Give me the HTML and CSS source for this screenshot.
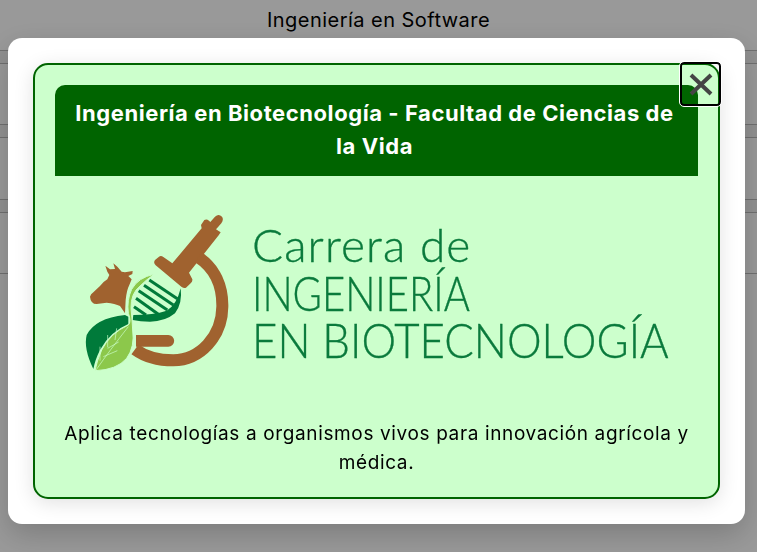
FILE: index.html
```html
<!DOCTYPE html>
<html lang="es">
<head>
<meta charset="utf-8">
<title>Carreras</title>
<link rel="stylesheet" href="styles.css">
</head>
<body>
<main class="page">
  <h1 class="page-title">Ingeniería en Software</h1>
  <div class="row"><div class="row-band"></div></div>
  <div class="row"><div class="row-band"></div></div>
  <div class="row"><div class="row-band"></div></div>
  <div class="row"></div>
</main>
<div class="backdrop">
  <section class="modal">
    <article class="card">
      <h2 class="card-title">Ingeniería en Biotecnología - Facultad de Ciencias de la Vida</h2>
      <div class="logo">
        <svg class="logo-mark" viewBox="0 0 570 570" width="190" height="190" aria-hidden="true">
          <g fill="#a0622f">
            <path d="M465 50Q476 40 486 50Q492 58 484 70L468 88L482 97L476 106L387 218L397 238Q398 244 392 250L378 263Q372 266 365 261L287 196Q279 188 285 180L297 170Q303 166 310 171L337 190L425 85L423 75L433 60Q440 56 447 62L451 66Z"/>
            <path d="M228 405H325A17.500 17.500 0 0 1 325 440H228Z"/>
            <path d="M90 290Q92 282 100 277L120 258Q130 245 142 238L148 225L142 215L136 197L150 208L165 207L160 190L172 200L185 215L195 217L218 213L217 222L205 228L215 238L208 255Q200 270 197 300L195 340L180 318Q165 310 140 308L110 312Q92 312 90 290Z"/>
          </g>
          <path d="M415 172C465 205 488 260 487 320C486 410 420 480 340 481C295 481 255 470 225 448" fill="none" stroke="#a0622f" stroke-width="36"/>
          <g stroke="#007a3a" stroke-width="9" fill="none">
            <path d="M268 240L352 296"/>
            <path d="M252 256L340 315"/>
            <path d="M236 272L322 330"/>
            <path d="M228 295L295 343"/>
            <path d="M222 320L258 345"/>
          </g>
          <path d="M220 345Q280 345 320 332Q350 315 362 265Q368 310 345 340Q315 365 270 365Q240 365 218 360Z" fill="#007a3a"/>
          <path d="M100 507Q70 445 80 405Q105 355 195 345L205 350L205 372Q150 395 120 450Q105 480 100 507Z" fill="#007a3a"/>
          <path d="M282 223Q235 232 215 268Q200 300 205 340Q215 365 205 375Q150 400 125 450Q110 485 105 512Q170 510 200 475Q225 440 218 390Q216 350 213 325Q212 280 240 258Q258 240 282 223Z" fill="#8cc84b" stroke="#ccffcc" stroke-width="3"/>
          <path d="M108 510Q150 450 205 380M130 470L172 452M143 445L176 426M120 482L120 440M143 442L143 405M165 420L170 385" fill="none" stroke="#ccffcc" stroke-width="2"/>
        </svg>
        <div class="logo-words">
          <div class="logo-line logo-line-small">Carrera de</div>
          <div class="logo-line logo-line-mid">INGENIERÍA</div>
          <div class="logo-line logo-line-long">EN BIOTECNOLOGÍA</div>
        </div>
      </div>
      <p class="card-text">Aplica tecnologías a organismos vivos para innovación agrícola y médica.</p>
    </article>
    <button class="close" aria-label="Cerrar">
      <svg viewBox="0 0 37 40" width="37" height="40" aria-hidden="true"><path d="M9 11l20 19M29 11L9 30" stroke="#444" stroke-width="4" fill="none"/></svg>
    </button>
  </section>
</div>
</body>
</html>
```
FILE: styles.css
```css
* { box-sizing: border-box; }
html, body { margin: 0; height: 100%; overflow: hidden; }
body { font-family: "Inter", "Liberation Sans", sans-serif; background: #fff; color: #000; }

.page-title { margin: 0; height: 50px; padding-top: 8px; text-align: center; font-size: 20px; font-weight: 400; line-height: 24px; letter-spacing: .46px; }
.row { height: 74.33px; border-top: 1px solid #bbb; }
.row-band { height: 13px; background: #f2f2f2; border-bottom: 1px solid #bbb; }

.backdrop { position: fixed; inset: 0; background: rgba(0,0,0,.4); padding: 38px 12px 28px 8px; }
.modal { position: relative; height: 486px; padding: 25px; background: #fff; border-radius: 14px; box-shadow: 0 10px 30px rgba(0,0,0,.2); }
.card { height: 436px; padding: 20px; background: #ccffcc; border: 2px solid #006400; border-radius: 15px; box-shadow: 0 4px 20px rgba(0,0,0,.12); display: flex; flex-direction: column; }
.card-title { margin: 0; padding: 12px 20px 13px 16px; background: #006400; color: #fff; border-radius: 10px 10px 0 0; text-align: center; font-size: 22px; line-height: 33px; font-weight: 700; letter-spacing: .57px; }

.logo { display: flex; align-items: flex-start; height: 220px; margin-top: 16px; padding-left: 5px; gap: 2px; }
.logo-mark { display: block; flex: none; margin-top: 8px; }
.logo-words { margin-top: 29px; color: #0a7a3c; font-family: "Lato", sans-serif; font-weight: 300; font-size: 48px; line-height: 47.5px; white-space: nowrap; -webkit-text-stroke: .35px #0a7a3c; }
.logo-line { transform-origin: left center; }
.logo-line-small { font-size: 46px; letter-spacing: 1.1px; }
.logo-line-mid { transform: scaleX(.833); }
.logo-line-long { transform: scaleX(.912); }

.card-text { margin: 7px 0 0; text-align: center; font-size: 19px; line-height: 29px; letter-spacing: .63px; }

.close { position: absolute; top: 24px; right: 24px; width: 41px; height: 44px; padding: 0; display: flex; align-items: center; justify-content: center; background: transparent; border: 2px solid #000; border-radius: 4px; outline: 1px solid #fff; }
```
